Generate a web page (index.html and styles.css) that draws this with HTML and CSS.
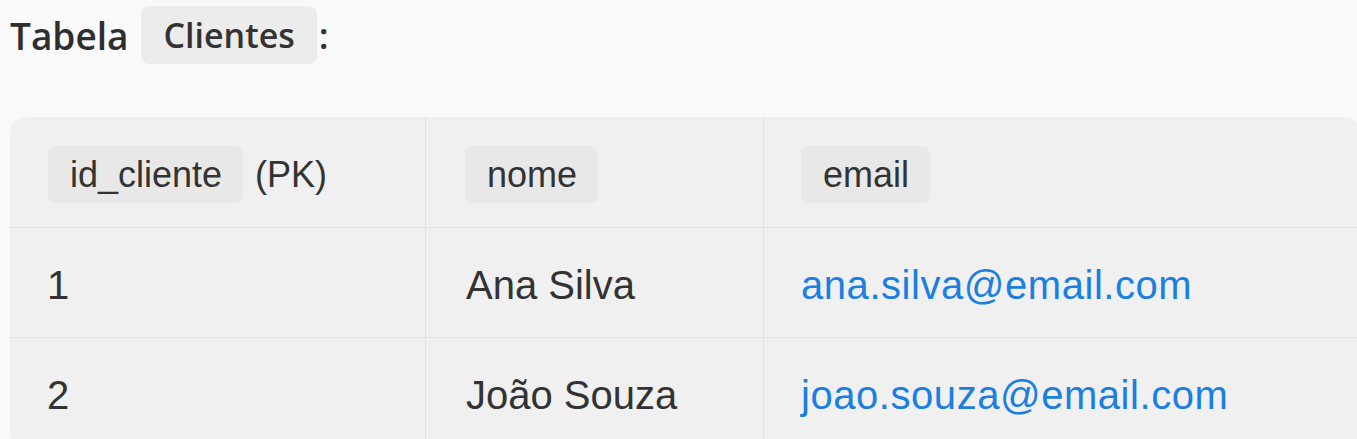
FILE: index.html
```html
<!DOCTYPE html>
<html lang="pt">
<head>
<meta charset="utf-8">
<title>Tabela Clientes</title>
<link rel="stylesheet" href="styles.css">
</head>
<body>
<div class="page">
  <div class="title">
    <span class="title-word">Tabela</span>
    <code class="title-pill">Clientes</code>
    <span class="colon">:</span>
  </div>
  <div class="table">
    <div class="cell head"><code class="pill">id_cliente</code><span class="pk">(PK)</span></div>
    <div class="cell head mid"><code class="pill">nome</code></div>
    <div class="cell head last"><code class="pill">email</code></div>

    <div class="cell">1</div>
    <div class="cell mid">Ana Silva</div>
    <div class="cell last"><a class="link" href="#">ana.silva@email.com</a></div>

    <div class="cell">2</div>
    <div class="cell mid">João Souza</div>
    <div class="cell last"><a class="link" href="#">joao.souza@email.com</a></div>
  </div>
</div>
</body>
</html>
```

FILE: styles.css
```css
html, body {
  margin: 0;
  padding: 0;
  background: #f9f9f9;
  overflow: hidden;
}

body {
  font-family: "Liberation Sans", Arial, sans-serif;
  color: #333333;
}

.page {
  padding: 6px 0 0 10px;
}

.title {
  display: flex;
  align-items: center;
  height: 58px;
  font-family: "Open Sans", "Liberation Sans", sans-serif;
  font-weight: 600;
}

.title-word {
  font-size: 37px;
  color: #2e2e2e;
  margin-right: 12px;
}

.title-pill {
  font-family: "Open Sans", "Liberation Sans", sans-serif;
  font-size: 34px;
  font-weight: 600;
  color: #333333;
  background: #ececec;
  border-radius: 8px;
  height: 58px;
  line-height: 58px;
  padding: 0 22px 0 23px;
}

.colon {
  font-size: 36px;
  color: #333333;
  margin-left: 2px;
}

.table {
  margin-top: 53px;
  width: 1350px;
  display: grid;
  grid-template-columns: 416px 338px 1fr;
  background: #f0f0f0;
  border-radius: 16px;
}

.cell {
  display: flex;
  align-items: flex-start;
  box-sizing: border-box;
  height: 110px;
  padding: 27px 0 0 37px;
  font-size: 40px;
  line-height: 60px;
  border-right: 1px solid #e2e2e2;
  border-bottom: 1px solid #e2e2e2;
  color: #333333;
}

.cell.mid {
  padding-left: 40px;
}

.cell.last {
  border-right: none;
}

.cell.head {
  height: 111px;
  padding-top: 29px;
  font-size: 36px;
}

.cell.head:first-child {
  padding-left: 38px;
}

.cell.head.mid {
  padding-left: 39px;
}

.pill {
  font-family: "Liberation Sans", Arial, sans-serif;
  font-size: 36px;
  color: #333333;
  background: #e8e8e8;
  border-radius: 8px;
  height: 57px;
  line-height: 57px;
  padding: 0 21px 0 22px;
}

.pk {
  line-height: 57px;
  margin-left: 12px;
}

.link {
  color: #1a7fe0;
  text-decoration: none;
  letter-spacing: 0.55px;
}
```
